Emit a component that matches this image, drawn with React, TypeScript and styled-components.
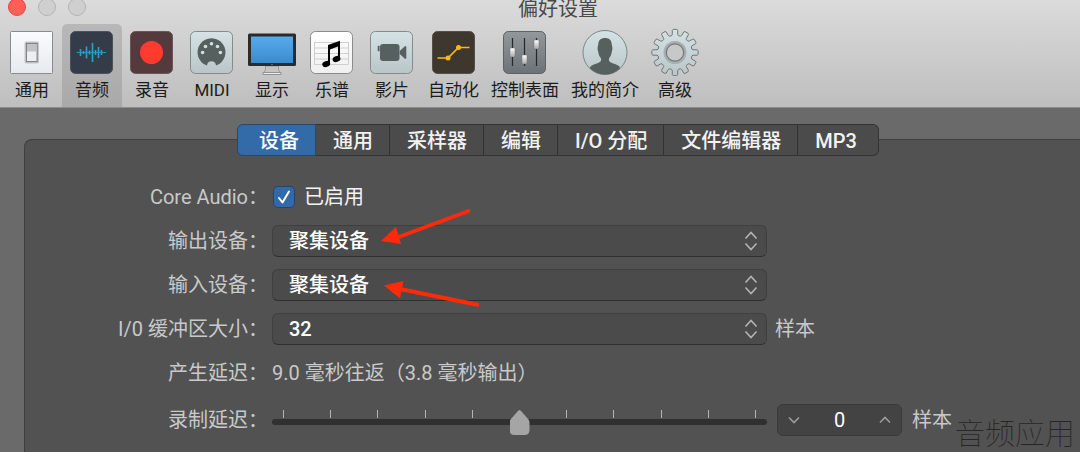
import React, { useState } from "react";
import styled, { createGlobalStyle, css } from "styled-components";

const GlobalStyle = createGlobalStyle`
  * { box-sizing: border-box; }
  body {
    margin: 0;
    background: #6a6a6a;
    font-family: Roboto, "Noto Sans CJK SC", sans-serif;
    font-size: 20px;
    line-height: 32px;
    color: #c9c9c9;
  }
  button, input, select { font: inherit; color: inherit; margin: 0; }
`;

const Window = styled.main`
  position: relative;
  display: flex;
  flex-direction: column;
  min-height: 100vh;
  overflow: hidden;
`;

const Header = styled.header`
  background: linear-gradient(#dbdbdb, #bebebe);
  border-bottom: 1px solid #8c8c8c;
  color: #1c1c1c;
`;

const TitleBar = styled.div`
  display: grid;
  grid-template-columns: 1fr;
  height: 24px;
  align-items: start;
  > * { grid-area: 1 / 1; }
`;

const Title = styled.h1`
  margin: 0;
  padding-left: 36px;
  text-align: center;
  font-size: 20px;
  font-weight: 400;
  line-height: 18px;
  color: #4a4a4a;
`;

const Lights = styled.div`
  display: flex;
  gap: 12px;
  margin-top: -2px;
  padding-left: 8px;
`;

const Light = styled.button<{ $on?: boolean }>`
  width: 18px;
  height: 18px;
  padding: 0;
  border-radius: 50%;
  border: 1px solid ${(p) => (p.$on ? "#e2463f" : "#b4b4b4")};
  background: ${(p) => (p.$on ? "#ff5f57" : "#cfcfcf")};
`;

const Toolbar = styled.nav`
  display: flex;
  padding-left: 2px;
`;

const ToolItem = styled.button<{ $active?: boolean }>`
  display: flex;
  flex-direction: column;
  align-items: center;
  gap: 2px;
  min-width: 60px;
  height: 83px;
  padding: 4px 6px 0;
  border: 0;
  border-radius: 5px 5px 0 0;
  background: ${(p) => (p.$active ? "linear-gradient(#b8b8b8, #a9a9a9)" : "none")};
  font-size: 17px;
  line-height: 24px;
  white-space: nowrap;
`;

const ToolIcon = styled.svg`
  display: block;
  width: 48px;
  height: 48px;
`;

const Content = styled.div`
  display: flex;
  flex-direction: column;
  flex: 1;
  padding: 16px 0 0 24px;
`;

const Tabs = styled.div`
  display: flex;
  justify-content: center;
  padding-left: 12px;
  margin-bottom: -17px;
  z-index: 1;
`;

const Tab = styled.button<{ $active?: boolean }>`
  height: 32px;
  padding: 2px 16px 0 17px;
  border: 1px solid #333;
  border-left-width: 0;
  background: #4b4b4b;
  color: #f2f2f2;
  font-weight: 500;
  line-height: 28px;
  white-space: nowrap;
  &:first-child {
    padding-left: 21px;
    border-left-width: 1px;
    border-radius: 6px 0 0 6px;
  }
  &:last-child {
    padding-right: 21px;
    border-radius: 0 6px 6px 0;
  }
  ${(p) =>
    p.$active &&
    css`
      background: #326ba8;
      border-color: #25486d;
      color: #fff;
    `}
`;

const Panel = styled.section`
  display: flex;
  flex-direction: column;
  gap: 12px;
  flex: 1;
  padding: 41px 0 12px;
  background: #525252;
  border: solid #3f3f3f;
  border-width: 1px 0 0 1px;
  border-radius: 8px 0 0 0;
`;

const Row = styled.div<{ $wide?: boolean }>`
  display: flex;
  align-items: center;
  gap: ${(p) => (p.$wide ? 10 : 8)}px;
  min-height: ${(p) => (p.$wide ? 38 : 32)}px;
`;

const Label = styled.label`
  flex: none;
  width: 243px;
  margin-right: -4px;
  text-align: right;
  white-space: nowrap;
`;

const WideLabel = styled(Label)`
  margin-right: -6px;
`;

const Unit = styled.span`
  white-space: nowrap;
`;

const CheckField = styled.label`
  display: flex;
  align-items: center;
  gap: 9px;
  padding-left: 1px;
  color: #f4f4f4;
`;

const CheckBox = styled.span`
  display: grid;
  > * { grid-area: 1 / 1; }
  svg { pointer-events: none; }
  svg.off { visibility: hidden; }
`;

const CheckInput = styled.input`
  appearance: none;
  width: 22px;
  height: 22px;
  border: 1px solid #23466b;
  border-radius: 5px;
  background: #4b4b4b;
  &:checked { background: #3269a8; }
`;

const SelectBox = styled.div`
  display: grid;
  flex: 0 1 495px;
  align-items: center;
  > * { grid-area: 1 / 1; }
  svg {
    justify-self: end;
    margin-right: 9px;
    pointer-events: none;
  }
`;

const Select = styled.select`
  appearance: none;
  width: 100%;
  height: 32px;
  padding: 0 32px 0 16px;
  border: 1px solid #3f3f3f;
  border-bottom-color: #303030;
  border-radius: 6px;
  background: #4b4b4b;
  color: #fff;
  font-weight: 500;
  line-height: 28px;
`;

const SliderBox = styled.div`
  display: grid;
  flex: 0 1 495px;
  align-items: center;
  padding-top: 4px;
  > * { grid-area: 1 / 1; }
`;

const Ticks = styled.div`
  display: flex;
  justify-content: space-between;
  align-self: start;
  padding: 0 11px;
  margin-top: 2px;
`;

const Tick = styled.span<{ $hidden?: boolean }>`
  width: 1px;
  height: 8px;
  background: ${(p) => (p.$hidden ? "transparent" : "#b5b5b5")};
`;

const Slider = styled.input`
  appearance: none;
  width: 100%;
  height: 28px;
  background: none;
  &::-webkit-slider-runnable-track {
    height: 6px;
    border-radius: 3px;
    background: #303030;
  }
  &::-webkit-slider-thumb {
    appearance: none;
    width: 20px;
    height: 25px;
    margin-top: -9px;
    background: #a5a5a5;
    clip-path: path("M10 0 Q11 0 12 1.5 L19 9.5 Q20 11 20 12.5 V20 Q20 25 15 25 H5 Q0 25 0 20 V12.5 Q0 11 1 9.5 L8 1.5 Q9 0 10 0Z");
  }
`;

const Stepper = styled.div`
  display: flex;
  align-items: center;
  width: 125px;
  height: 32px;
  border: 1px solid #3a3a3a;
  border-radius: 6px;
  background: #434343;
`;

const StepButton = styled.button`
  display: grid;
  place-items: center;
  width: 32px;
  height: 30px;
  padding: 0;
  border: 0;
  background: none;
`;

const StepValue = styled.input`
  flex: 1;
  min-width: 0;
  padding: 0;
  border: 0;
  background: none;
  color: #fff;
  text-align: center;
  line-height: 28px;
`;

const Arrows = styled.svg`
  position: absolute;
  left: 370px;
  top: 200px;
  pointer-events: none;
`;

const Watermark = styled.span`
  position: absolute;
  right: 5px;
  bottom: 2px;
  font-size: 30px;
  font-weight: 100;
  color: #262626;
`;

const Square = ({ fill, stroke, r = 5 }: { fill: string; stroke: string; r?: number }) => (
  <rect x="2.5" y="3.5" width="42" height="42" rx={r} fill={fill} stroke={stroke} />
);

const gearPath = (() => {
  const teeth = 12;
  const pts: string[] = [];
  const at = (r: number, a: number) =>
    `${(24 + r * Math.sin(a)).toFixed(2)} ${(24.5 - r * Math.cos(a)).toFixed(2)}`;
  for (let i = 0; i < teeth; i++) {
    const a = (i / teeth) * Math.PI * 2;
    pts.push(
      at(17.2, a - 0.2),
      at(18.2, a - 0.15),
      at(22.4, a - 0.12),
      at(23.2, a - 0.08),
      at(23.2, a + 0.08),
      at(22.4, a + 0.12),
      at(18.2, a + 0.15),
      at(17.2, a + 0.2),
    );
  }
  return `M${pts.join("L")}Z`;
})();

const icons: Record<string, React.ReactNode> = {
  general: (
    <>
      <Square fill="url(#white)" stroke="#8b8b8b" r={1} />
      <rect x="17" y="14" width="13.500" height="21" rx="1" fill="#b4b6b8" stroke="#c4c6c8" />
      <rect x="18.500" y="15.500" width="10.500" height="18" fill="#eceeef" stroke="#6e7072" strokeWidth=".8" />
      <rect x="19" y="16" width="9.500" height="7.500" fill="#c0c2c4" />
    </>
  ),
  audio: (
    <>
      <Square fill="#343b49" stroke="#4b515c" />
      <path
        d="M10 24v1M13 21v7M16 23v3M19 18.500v12M22 22.500v4M25 15v19M28 22v5M31 19v11M34 22v5M37 24v1"
        transform="translate(-.5)"
        stroke="#2b9fc9"
        strokeWidth="1.700"
        fill="none"
      />
      <path d="M9 24.500h29" stroke="#2b9fc9" strokeWidth=".8" />
    </>
  ),
  record: (
    <>
      <Square fill="#543a3d" stroke="#6c5558" />
      <circle cx="23.500" cy="24.500" r="11.500" fill="#ff3b30" />
    </>
  ),
  midi: (
    <>
      <Square fill="url(#ice)" stroke="#848b8d" />
      <path d="M19 37.600A14 14 0 1 1 28 37.600C28 31.800 19 31.800 19 37.600Z" fill="#56605f" />
      <g fill="#d3dfe1">
        <circle cx="14.600" cy="24.500" r="1.800" />
        <circle cx="17.500" cy="18.500" r="1.800" />
        <circle cx="23.500" cy="15.700" r="1.800" />
        <circle cx="29.500" cy="18.500" r="1.800" />
        <circle cx="32.400" cy="24.500" r="1.800" />
      </g>
    </>
  ),
  display: (
    <>
      <path d="M17.500 38h13v4l2.500 3.500H15l2.500-3.500z" fill="#c4c4c4" stroke="#8a8a8a" strokeWidth=".7" />
      <path d="M15 44.500h18v2H15z" fill="#ececec" stroke="#777" strokeWidth=".7" />
      <rect x="0" y="5.500" width="48" height="32.500" rx="1.500" fill="#2b2b2b" />
      <rect x="3" y="8.500" width="42" height="26.500" fill="url(#screen)" />
      <circle cx="24" cy="36.500" r=".7" fill="#888" />
    </>
  ),
  score: (
    <>
      <Square fill="url(#paper)" stroke="#8b8b8b" />
      <path d="M6.500 14.500h34v22h-34zM6.500 20h34M6.500 25.500h34M6.500 31h34" fill="none" stroke="#cfcfcf" />
      <path d="M20 17 32 12.800V31h-2V18.500L22 21.500V36h-2z" />
      <ellipse cx="18.200" cy="36" rx="4" ry="3" transform="rotate(-18 18.200 36)" />
      <ellipse cx="28.500" cy="31" rx="4" ry="3" transform="rotate(-18 28.500 31)" />
    </>
  ),
  movie: (
    <>
      <Square fill="url(#ice)" stroke="#848b8d" />
      <rect x="12" y="16" width="19.500" height="17" rx="3" fill="#56605f" />
      <path d="M32 23l5-4.500h1v12h-1L32 26zM10 18h1.200v5H10z" fill="#56605f" stroke="#56605f" strokeWidth=".6" />
    </>
  ),
  automation: (
    <>
      <Square fill="#3d372e" stroke="#544e46" />
      <path d="M7.500 30H18L28.500 19.500H39.500" fill="none" stroke="#fdb90f" strokeWidth="1.700" />
      <circle cx="18" cy="30" r="2.500" fill="#fdb90f" />
      <circle cx="28.500" cy="19.500" r="2.500" fill="#fdb90f" />
    </>
  ),
  surfaces: (
    <>
      <Square fill="url(#steel)" stroke="#5c6164" />
      <path d="M11.500 10v28M23.500 10v28M35.500 10v28" stroke="#24282a" strokeWidth="1.200" />
      <g fill="url(#knob)" stroke="#666" strokeWidth=".4">
        <rect x="9" y="20" width="5" height="9" rx="1" />
        <rect x="21" y="27" width="5" height="9" rx="1" />
        <rect x="33" y="12" width="5" height="9" rx="1" />
      </g>
    </>
  ),
  profile: (
    <>
      <circle cx="24" cy="24.500" r="22" fill="url(#ice)" stroke="#7c8588" />
      <path
        d="M9 40.500C9 37 14 36.500 18 34.500 20.500 33.200 20.500 31.500 19.500 29.500 17.800 28 17.500 25 17 23 16 20 17 18.500 17.300 16 17.500 12 20 10 24 10S30.500 12 30.700 16C31 18.500 32 20 31 23 30.500 25 30.200 28 28.500 29.500 27.500 31.500 27.500 33.200 30 34.500 34 36.500 39 37 39 40.500A22 22 0 0 1 9 40.500Z"
        fill="#56605f"
      />
    </>
  ),
  advanced: (
    <>
      <path d={gearPath} fill="url(#ice)" stroke="#6f7779" strokeWidth="1" strokeLinejoin="round" />
      <circle cx="24" cy="24.500" r="11.500" fill="#a7afb1" />
      <circle cx="24" cy="24.500" r="8.700" fill="#c8c8c8" stroke="#6f7779" strokeWidth="1.200" />
    </>
  ),
};

const tools: [string, string][] = [
  ["general", "通用"],
  ["audio", "音频"],
  ["record", "录音"],
  ["midi", "MIDI"],
  ["display", "显示"],
  ["score", "乐谱"],
  ["movie", "影片"],
  ["automation", "自动化"],
  ["surfaces", "控制表面"],
  ["profile", "我的简介"],
  ["advanced", "高级"],
];

const tabs = ["设备", "通用", "采样器", "编辑", "I/O 分配", "文件编辑器", "MP3"];

const gradients: [string, string, string][] = [
  ["white", "#fbfcfe", "#e6e9ee"],
  ["ice", "#d5e3e6", "#bac5c7"],
  ["paper", "#ffffff", "#efefef"],
  ["screen", "#58abeb", "#3a8bcd"],
  ["steel", "#92989c", "#6c7276"],
  ["knob", "#ffffff", "#a8a8a8"],
];

const GradientDefs = styled.svg`
  display: block;
`;

const Gradients = () => (
  <GradientDefs width="0" height="0" aria-hidden>
    <defs>
      {gradients.map(([id, from, to]) => (
        <linearGradient key={id} id={id} x1="0" y1="0" x2="0" y2="1">
          <stop offset="0" stopColor={from} />
          <stop offset="1" stopColor={to} />
        </linearGradient>
      ))}
    </defs>
  </GradientDefs>
);

const UpDown = () => (
  <svg width="14" height="20" fill="none" stroke="#b4b4b4" strokeWidth="1.600">
    <path d="M1.500 7.500 7 1.500 12.500 7.500M1.500 12.500 7 18.500 12.500 12.500" />
  </svg>
);

const PopUp = ({ id, options }: { id: string; options: string[] }) => (
  <SelectBox>
    <Select id={id}>
      {options.map((o) => (
        <option key={o}>{o}</option>
      ))}
    </Select>
    <UpDown />
  </SelectBox>
);

export default function App() {
  const [tool, setTool] = useState("audio");
  const [tab, setTab] = useState(tabs[0]);
  const [enabled, setEnabled] = useState(true);
  const [delay, setDelay] = useState(0);

  return (
    <Window>
      <GlobalStyle />
      <Gradients />
      <Header>
        <TitleBar>
          <Title>偏好设置</Title>
          <Lights>
            <Light $on aria-label="关闭" />
            <Light aria-label="最小化" />
            <Light aria-label="缩放" />
          </Lights>
        </TitleBar>
        <Toolbar>
          {tools.map(([id, name]) => (
            <ToolItem key={id} $active={id === tool} onClick={() => setTool(id)}>
              <ToolIcon viewBox="0 0 48 48">{icons[id]}</ToolIcon>
              {name}
            </ToolItem>
          ))}
        </Toolbar>
      </Header>
      <Content>
        <Tabs role="tablist">
          {tabs.map((name) => (
            <Tab
              key={name}
              role="tab"
              aria-selected={name === tab}
              $active={name === tab}
              onClick={() => setTab(name)}
            >
              {name}
            </Tab>
          ))}
        </Tabs>
        <Panel>
          <Row>
            <Label htmlFor="core">Core Audio：</Label>
            <CheckField>
              <CheckBox>
                <CheckInput
                  id="core"
                  type="checkbox"
                  checked={enabled}
                  onChange={(e) => setEnabled(e.target.checked)}
                />
                <svg className={enabled ? "" : "off"} width="22" height="22" fill="none" stroke="#fff" strokeWidth="2" strokeLinecap="round" strokeLinejoin="round">
                  <path d="M6 12 9.500 16.500 16 5.500" />
                </svg>
              </CheckBox>
              已启用
            </CheckField>
          </Row>
          <Row>
            <Label htmlFor="output">输出设备：</Label>
            <PopUp id="output" options={["聚集设备"]} />
          </Row>
          <Row>
            <Label htmlFor="input">输入设备：</Label>
            <PopUp id="input" options={["聚集设备"]} />
          </Row>
          <Row>
            <Label htmlFor="buffer">I/0 缓冲区大小：</Label>
            <PopUp id="buffer" options={["32", "64", "128", "256"]} />
            <Unit>样本</Unit>
          </Row>
          <Row>
            <Label as="span">产生延迟：</Label>
            <Unit>9.0 毫秒往返（3.8 毫秒输出）</Unit>
          </Row>
          <Row $wide>
            <WideLabel htmlFor="delay">录制延迟：</WideLabel>
            <SliderBox>
              <Ticks>
                {Array.from({ length: 11 }, (_, i) => (
                  <Tick key={i} $hidden={i === 5} />
                ))}
              </Ticks>
              <Slider
                id="delay"
                type="range"
                min={-5000}
                max={5000}
                value={delay}
                onChange={(e) => setDelay(Number(e.target.value))}
              />
            </SliderBox>
            <Stepper>
              <StepButton aria-label="减少" onClick={() => setDelay(delay - 1)}>
                <svg width="12" height="8" fill="none" stroke="#9c9c9c" strokeWidth="1.600">
                  <path d="M1 1.500 6 6.500 11 1.500" />
                </svg>
              </StepButton>
              <StepValue
                aria-label="录制延迟"
                value={delay}
                onChange={(e) => setDelay(Number(e.target.value) || 0)}
              />
              <StepButton aria-label="增加" onClick={() => setDelay(delay + 1)}>
                <svg width="12" height="8" fill="none" stroke="#9c9c9c" strokeWidth="1.600">
                  <path d="M1 6.500 6 1.500 11 6.500" />
                </svg>
              </StepButton>
            </Stepper>
            <Unit>样本</Unit>
          </Row>
        </Panel>
      </Content>
      <Arrows width="120" height="115" fill="#ff2a0a" stroke="#ff2a0a">
        <path d="M26 38 100 10.500M30 89 109 105" strokeWidth="4" />
        <path d="M11 41 26 27 31 44ZM14 85.500 33.500 81 30 98.500Z" stroke="none" />
      </Arrows>
      <Watermark>音频应用</Watermark>
    </Window>
  );
}
